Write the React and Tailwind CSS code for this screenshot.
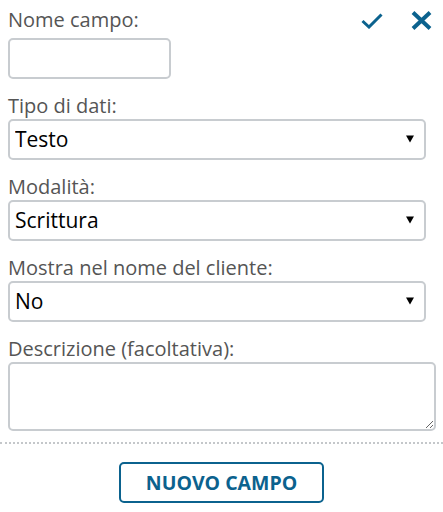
import React from "react";

const font = { fontFamily: '"Open Sans", "Liberation Sans", sans-serif' };

const Select = ({ value }) => {
	return (
		<div className="relative mt-[1px] w-[418px]">
			<select
				defaultValue={value}
				className="appearance-none w-full h-[41px] border-2 border-[#c8ccd0] rounded-[5px] bg-white pl-[5px] text-[21px] text-black outline-none"
			>
				<option>{value}</option>
			</select>
			<svg className="pointer-events-none absolute right-[12px] top-[16px]" width="8" height="8" viewBox="0 0 8 8">
				<polygon points="0,0.5 8,0.5 4,7.5" fill="#000" />
			</svg>
		</div>
	);
};

const Label = ({ children, className }) => {
	return <div className={"text-[20px] leading-[24px] text-[#555555] " + (className || "")}>{children}</div>;
};

const App = () => {
	return (
		<div className="w-[443px] h-[512px] bg-white" style={font}>
			<div className="px-[8px] pt-[8px]">
				<div className="flex items-start justify-between">
					<Label>Nome campo:</Label>
					<div className="flex items-center gap-[28px] pr-[3px] pt-[3px]">
						<svg width="22" height="16" viewBox="0 0 22 16">
							<path d="M1.5 8 L8 14 L20.5 1.5" fill="none" stroke="#0b628e" strokeWidth="3" />
						</svg>
						<svg width="21" height="19" viewBox="0 0 21 19">
							<path d="M2 1.5 L19 17.5 M19 1.5 L2 17.5" fill="none" stroke="#0b628e" strokeWidth="4" />
						</svg>
					</div>
				</div>
				<input className="mt-[6px] block w-[163px] h-[41px] border-2 border-[#c8ccd0] rounded-[5px] outline-none" />

				<Label className="mt-[15px]">Tipo di dati:</Label>
				<Select value="Testo" />

				<Label className="mt-[15px]">Modalità:</Label>
				<Select value="Scrittura" />

				<Label className="mt-[15px]">Mostra nel nome del cliente:</Label>
				<Select value="No" />

				<Label className="mt-[15px]">Descrizione (facoltativa):</Label>
				<textarea className="mt-[1px] block w-[428px] h-[69px] border-2 border-[#c8ccd0] rounded-[5px] outline-none" />
			</div>
			<div className="mt-[11px] border-t-2 border-dotted border-[#c4c7ca]"></div>
			<div className="flex justify-center mt-[18px]">
				<button className="w-[205px] h-[41px] border-2 border-[#0b628e] rounded-[5px] text-[19.5px] font-bold text-[#0b628e]">
					NUOVO CAMPO
				</button>
			</div>
		</div>
	);
};

export default App;
